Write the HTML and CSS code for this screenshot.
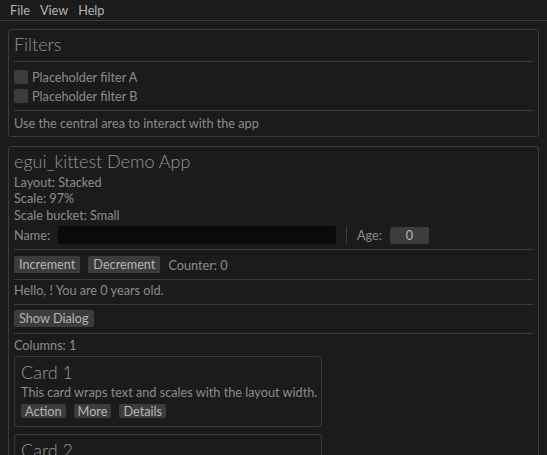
FILE: index.html
```html
<!DOCTYPE html>
<html>
<head>
<meta charset="utf-8">
<title>egui_kittest Demo App</title>
<link rel="stylesheet" href="styles.css">
</head>
<body>
<div class="menubar">
  <span class="menu-item">File</span>
  <span class="menu-item">View</span>
  <span class="menu-item">Help</span>
</div>

<section class="panel filters">
  <h2 class="heading">Filters</h2>
  <div class="sep sep-a"></div>
  <label class="check"><span class="box"></span><span>Placeholder filter A</span></label>
  <label class="check"><span class="box"></span><span>Placeholder filter B</span></label>
  <div class="sep sep-b"></div>
  <p class="hint">Use the central area to interact with the app</p>
</section>

<section class="panel main">
  <h2 class="heading">egui_kittest Demo App</h2>
  <div class="info">
    <p class="line">Layout: Stacked</p>
    <p class="line">Scale: 97%</p>
    <p class="line">Scale bucket: Small</p>
  </div>
  <div class="name-row">
    <span class="name-label">Name:</span>
    <span class="textbox"></span>
    <span class="vsep"></span>
    <span class="age-label">Age:</span>
    <span class="drag">0</span>
  </div>
  <div class="sep sep-c"></div>
  <div class="btn-row">
    <button class="btn">Increment</button>
    <button class="btn">Decrement</button>
    <span class="counter">Counter: 0</span>
  </div>
  <div class="sep sep-d"></div>
  <p class="hello">Hello, ! You are 0 years old.</p>
  <div class="sep sep-e"></div>
  <div class="btn-row dialog-row">
    <button class="btn">Show Dialog</button>
  </div>
  <div class="sep sep-f"></div>
  <p class="line columns">Columns: 1</p>
  <div class="card first">
    <h2 class="heading">Card 1</h2>
    <p class="line card-text">This card wraps text and scales with the layout width.</p>
    <div class="card-btns">
      <button class="btn small">Action</button>
      <button class="btn small">More</button>
      <button class="btn small">Details</button>
    </div>
  </div>
  <div class="card last">
    <h2 class="heading">Card 2</h2>
  </div>
</section>
</body>
</html>
```
FILE: styles.css
```css
* { box-sizing: border-box; }
html, body { margin: 0; padding: 0; }
body {
  background: #1b1b1b;
  color: #8c8c8c;
  font-family: "Lato", "Open Sans", sans-serif;
  font-size: 12.7px;
  width: 547px;
  height: 455px;
  overflow: hidden;
}
p, h2 { margin: 0; font-weight: normal; }

.menubar {
  height: 21px;
  border-bottom: 1px solid #3c3c3c;
  display: flex;
  align-items: center;
  padding-left: 10px;
  gap: 10px;
  color: #b4b4b4;
  line-height: 16.5px;
}

.panel {
  margin: 8px 8px 0;
  border: 1px solid #3c3c3c;
  border-radius: 3px;
  padding: 4px 5px 5px;
}
.main { margin-top: 9px; }

.heading {
  font-size: 18px;
  font-weight: 300;
  line-height: 20px;
  color: #969696;
  white-space: nowrap;
}

.sep { height: 1px; background: #3c3c3c; }
.sep-a { margin: 7px 0 5px; }
.sep-b { margin: 5px 0 4px; }
.sep-c { margin: 5px 0 6px; }
.sep-d { margin: 6px 0 0; }
.sep-e { margin: 5px 0 5px; }
.sep-f { margin: 6px 0 0; }

.check {
  display: flex;
  align-items: center;
  height: 19px;
  gap: 4px;
}
.box {
  width: 14px;
  height: 14px;
  border-radius: 2px;
  background: #3c3c3c;
}
.hint { line-height: 16px; }

.info { margin-top: 2.5px; }
.line { line-height: 16.5px; white-space: nowrap; }

.name-row {
  display: flex;
  align-items: center;
  height: 18px;
  margin-top: 3px;
}
.name-label { width: 44px; }
.textbox {
  width: 278px;
  height: 18px;
  background: #0a0a0a;
  border-radius: 2px;
}
.vsep {
  width: 1px;
  height: 18px;
  background: #3c3c3c;
  margin: 0 10px;
}
.age-label { margin-right: 8px; }
.drag {
  width: 39px;
  height: 17px;
  margin-top: 1px;
  background: #3c3c3c;
  border-radius: 2px;
  color: #b4b4b4;
  text-align: center;
  line-height: 17px;
}

.btn-row {
  display: flex;
  align-items: center;
  gap: 8px;
  height: 17px;
}
.btn {
  font: inherit;
  color: #b4b4b4;
  background: #3c3c3c;
  border: none;
  border-radius: 2px;
  height: 17px;
  line-height: 17px;
  padding: 0 5px;
  margin: 0;
}

.hello { margin-top: 2px; line-height: 17px; }
.columns { margin-top: 3px; }

.card {
  width: 308px;
  border: 1px solid #3c3c3c;
  border-radius: 3px;
  padding: 5px 6px 8px;
  margin-top: 7px;
}
.card.first { margin-top: 2.5px; }
.card-text { margin-top: 1.5px; }
.card-btns {
  display: flex;
  gap: 8px;
  margin-top: 4px;
}
.btn.small {
  height: 14px;
  line-height: 14px;
  padding: 0 4px;
}
```
